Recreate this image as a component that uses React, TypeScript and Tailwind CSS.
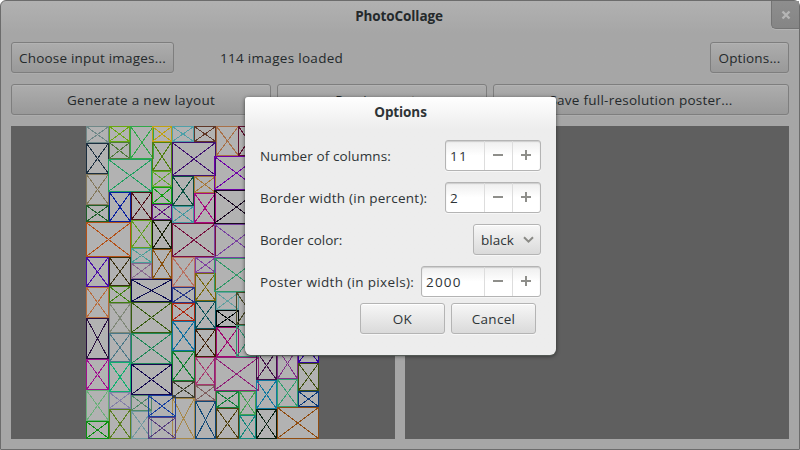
import React from "react";

type Tile = [number, number, number, number, string];

// left, top, right, bottom, outline colour
const tiles: Tile[] = [
  [86, 126, 109, 143, "#6f8888"], [86, 143, 109, 174, "#1b2f40"], [86, 174, 109, 205, "#84785a"], [86, 205, 109, 222, "#1f5f2a"],
  [86, 222, 131, 257, "#b45016"], [86, 257, 109, 287, "#4a0fa8"], [86, 287, 109, 318, "#b86c3c"], [86, 318, 109, 359, "#2a1040"],
  [86, 359, 109, 390, "#a0108f"], [86, 390, 109, 421, "#6ab07a"], [86, 421, 109, 439, "#0a9010"],
  [109, 126, 130, 142, "#68a810"], [109, 142, 130, 159, "#4f7a3a"], [130, 126, 154, 159, "#30a848"], [108, 159, 152, 192, "#20a060"],
  [109, 192, 131, 222, "#0820a0"], [109, 257, 131, 286, "#3a3010"], [109, 286, 131, 303, "#408010"], [109, 303, 131, 333, "#808878"],
  [109, 333, 131, 362, "#4a7888"], [109, 362, 131, 392, "#10b070"], [109, 392, 131, 409, "#8480a8"], [109, 409, 131, 439, "#5a8020"],
  [131, 192, 152, 220, "#501018"], [131, 220, 152, 248, "#60a020"], [131, 248, 152, 263, "#48a098"], [131, 263, 152, 279, "#886890"],
  [131, 279, 172, 302, "#0c0c50"], [131, 302, 172, 333, "#385c10"], [131, 333, 172, 364, "#208858"], [131, 364, 172, 395, "#140850"],
  [131, 395, 152, 411, "#508868"], [131, 411, 152, 439, "#7098a0"],
  [152, 126, 172, 142, "#c0a010"], [152, 142, 172, 171, "#508010"], [152, 171, 172, 187, "#60a828"], [152, 187, 172, 204, "#10a010"],
  [152, 204, 172, 220, "#601080"], [152, 220, 172, 249, "#182008"], [152, 249, 172, 279, "#885010"],
  [172, 398, 195, 439, "#a88848"], [148, 395, 176, 417, "#1840a0"], [148, 417, 176, 439, "#584080"],
  [172, 126, 194, 142, "#50a0a8"], [172, 142, 216, 176, "#401070"], [172, 176, 194, 206, "#085040"], [172, 206, 194, 223, "#4098a0"],
  [172, 223, 216, 257, "#781040"], [172, 257, 195, 287, "#b87060"], [172, 287, 195, 303, "#283888"], [172, 303, 195, 321, "#b02810"],
  [172, 321, 195, 351, "#1070a0"], [172, 351, 195, 381, "#108030"], [172, 381, 195, 398, "#404030"],
  [194, 126, 216, 142, "#603828"], [194, 176, 216, 193, "#a87838"], [194, 193, 216, 223, "#a80880"], [195, 257, 216, 273, "#8040a0"],
  [195, 273, 216, 301, "#786808"], [195, 301, 216, 329, "#085058"], [195, 329, 216, 357, "#402008"], [195, 357, 216, 385, "#a83870"],
  [195, 385, 216, 401, "#806060"], [195, 401, 216, 439, "#104878"],
  [216, 126, 239, 156, "#a87048"], [238, 126, 259, 156, "#601030"], [214, 156, 259, 190, "#7000a8"], [214, 190, 259, 224, "#180820"],
  [214, 224, 259, 258, "#7840a0"], [214, 258, 259, 292, "#309868"], [216, 292, 239, 310, "#60a0a0"], [216, 310, 239, 327, "#000808"],
  [216, 327, 239, 357, "#a00870"], [236, 292, 259, 325, "#4a4a28"], [236, 325, 259, 357, "#309070"],
  [214, 357, 259, 391, "#902078"], [216, 391, 239, 408, "#108038"], [216, 408, 239, 439, "#504010"],
  [239, 391, 256, 415, "#40a050"], [239, 415, 256, 439, "#10887c"],
  [256, 351, 277, 380, "#401048"], [256, 380, 277, 409, "#1078a0"], [256, 409, 277, 439, "#082010"],
  [277, 348, 298, 379, "#803088"], [277, 379, 298, 407, "#30a070"], [277, 407, 319, 439, "#904c10"],
  [298, 335, 319, 363, "#3000a0"], [298, 363, 319, 391, "#405010"], [298, 391, 319, 407, "#083878"],
];

function Collage() {
  return (
    <svg className="ml-[75px] block" width="233" height="313" viewBox="86 126 233 313">
      <rect x="86" y="126" width="233" height="313" fill="#b2b2b2" />
      {tiles.map(([l, t, r, b, c], i) => (
        <g key={i} stroke={c} fill="none" shapeRendering="crispEdges">
          <rect x={l + 0.5} y={t + 0.5} width={r - l - 1} height={b - t - 1} />
          <path d={`M${l + 1} ${t + 1}L${r - 1} ${b - 1}M${r - 1} ${t + 1}L${l + 1} ${b - 1}`} />
        </g>
      ))}
    </svg>
  );
}

function DimButton({ className, children }: { className: string; children: React.ReactNode }) {
  return (
    <button className={`flex h-[31px] items-center justify-center whitespace-nowrap rounded-[3px] border border-[#7e7e7e] bg-linear-to-b from-[#adadad] to-[#999999] pt-px shadow-[0_1px_0_#adadad,inset_0_1px_0_#b3b3b3] ${className}`}>
      {children}
    </button>
  );
}

function DialogButton({ children }: { children: React.ReactNode }) {
  return (
    <button className="flex h-[31px] w-[85px] items-center justify-center rounded-[3px] border border-[#b4b4b4] bg-linear-to-b from-[#f7f7f7] to-[#dadada] pt-px tracking-[0.3px] shadow-[0_1px_0_#f7f7f7,inset_0_1px_0_#ffffff]">
      {children}
    </button>
  );
}

function Spin({ value, className }: { value: string; className: string }) {
  return (
    <div className={`flex h-[31px] overflow-hidden rounded-[3px] border border-[#b4b4b4] bg-linear-to-b from-[#eeeeee] to-white to-50% shadow-[0_1px_0_#f7f7f7,inset_0_1px_1px_#cccccc] ${className}`}>
      <span className="flex flex-1 items-center pl-1 pt-px tracking-[1.2px]">{value}</span>
      <span className="flex w-7 items-center justify-center border-l border-[#dddddd]">
        <svg width="11" height="11" viewBox="0 0 11 11"><path d="M0 5h10" stroke="#8e8e8a" strokeWidth="2" /></svg>
      </span>
      <span className="flex w-7 items-center justify-center border-l border-[#dddddd]">
        <svg width="11" height="11" viewBox="0 0 11 11"><path d="M0 5h10M5 0v10" stroke="#8e8e8a" strokeWidth="2" /></svg>
      </span>
    </div>
  );
}

function Row({ label, tracking, children }: { label: string; tracking: string; children: React.ReactNode }) {
  return (
    <div className="flex h-[31px] items-center justify-between">
      <span className={`whitespace-nowrap pt-px ${tracking}`}>{label}</span>
      {children}
    </div>
  );
}

export default function App() {
  return (
    <div className="relative h-[450px] w-[800px] overflow-hidden bg-white font-['Open_Sans','Noto_Sans',sans-serif] text-[13.5px] leading-5 text-[#2e3436]">
      <main className="flex h-[450px] flex-col rounded-t-[6px] border border-[#6c6c6c] bg-linear-to-b from-[#b1b1b1] to-[#a6a6a6] to-[32px] text-[#24292b]">
        <header className="flex h-[41px] shrink-0 items-start">
          <h1 className="flex-1 pl-[26px] pt-[5px] text-center text-[13.5px] font-bold tracking-[-0.1px]">PhotoCollage</h1>
          <button className="flex h-7 w-7 items-center justify-center rounded-bl-[5px] border-b border-l border-[#747474] bg-linear-to-b from-[#8e8e8e] to-[#858585] shadow-[0_1px_0_#b4b4b4]">
            <svg width="10" height="10" viewBox="0 0 10 10"><path d="M1.5 1.5l7 7m0-7l-7 7" stroke="#b5b5b5" strokeWidth="2.4" /></svg>
          </button>
        </header>
        <div className="flex h-[31px] shrink-0 items-center px-[10px]">
          <DimButton className="w-[163px] tracking-[0.2px]">Choose input images...</DimButton>
          <span className="flex-1 pl-[46px] pt-px tracking-[0.3px]">114 images loaded</span>
          <DimButton className="w-[79px] tracking-[0.15px]">Options...</DimButton>
        </div>
        <div className="mt-[11px] flex shrink-0 gap-1.5 px-[10px]">
          <DimButton className="w-[260px] tracking-[0.3px]">Generate a new layout</DimButton>
          <DimButton className="w-[210px]">Preview poster</DimButton>
          <DimButton className="w-[296px] tracking-[0.25px]">Save full-resolution poster...</DimButton>
        </div>
        <div className="mt-[11px] flex h-[313px] shrink-0 gap-[10px] px-[10px]">
          <section className="w-[384px] bg-[#5f5f5f]"><Collage /></section>
          <section className="w-[384px] bg-[#5f5f5f]" />
        </div>
      </main>

      <div role="dialog" className="absolute left-[245px] top-[97px] flex h-[258px] w-[311px] flex-col rounded-t-[3px] rounded-b-[6px] bg-linear-to-b from-white to-[#ededed] to-[32px] pl-[15px] pr-[15px] shadow-[0_1px_1px_#555b57,0_1px_4px_rgba(0,0,0,0.55)]">
        <h2 className="h-[43px] pt-[5px] text-center font-bold tracking-[-0.1px]">Options</h2>
        <div className="flex flex-col gap-[11px]">
          <Row label="Number of columns:" tracking="tracking-[0.1px]"><Spin value="11" className="w-24" /></Row>
          <Row label="Border width (in percent):" tracking="tracking-[0.24px]"><Spin value="2" className="w-24" /></Row>
          <Row label="Border color:" tracking="tracking-normal">
            <button className="flex h-[31px] w-[68px] items-center justify-between rounded-[3px] border border-[#b4b4b4] bg-linear-to-b from-[#f7f7f7] to-[#dadada] pl-[7px] pr-1.5 pt-px shadow-[0_1px_0_#f7f7f7,inset_0_1px_0_#ffffff]">
              black
              <svg width="11" height="8" viewBox="0 0 11 8"><path d="M1 1.2l4.5 4.5L10 1.2" fill="none" stroke="#8a8a86" strokeWidth="2" /></svg>
            </button>
          </Row>
          <Row label="Poster width (in pixels):" tracking="tracking-[0.34px]"><Spin value="2000" className="w-[120px]" /></Row>
        </div>
        <div className="mt-1.5 flex justify-end gap-1.5 pr-[5px]">
          <DialogButton>OK</DialogButton>
          <DialogButton>Cancel</DialogButton>
        </div>
      </div>
    </div>
  );
}
